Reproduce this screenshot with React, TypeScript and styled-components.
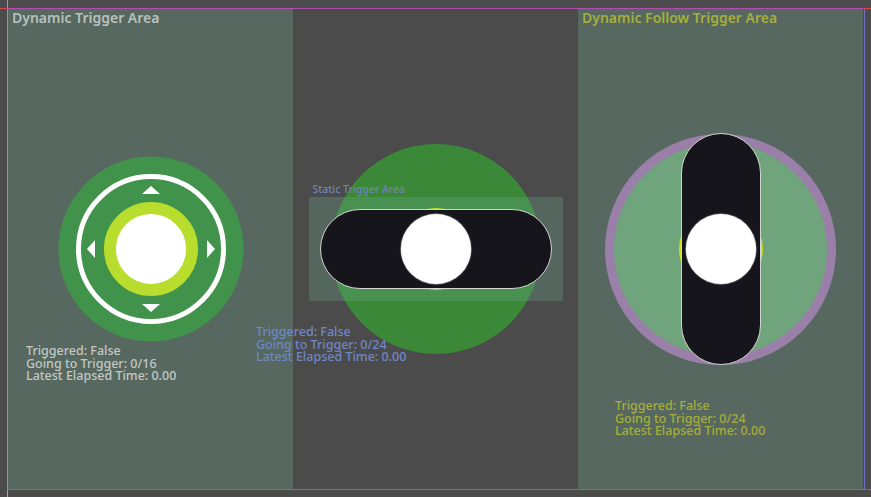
import React from "react";
import styled, { createGlobalStyle } from "styled-components";

const GlobalStyle = createGlobalStyle`
  html, body {
    margin: 0;
    padding: 0;
    background: #4b4b4b;
    font-family: "Noto Sans", "Open Sans", sans-serif;
  }
`;

const Viewport = styled.div`
  position: relative;
  width: 871px;
  height: 497px;
  overflow: hidden;
  background: #4b4b4b;
`;

const Scene = styled.div`
  display: flex;
  padding: 9px 0 0 8px;
`;

const Column = styled.div<{ $tinted?: boolean }>`
  position: relative;
  width: 285px;
  height: 480px;
  display: grid;
  place-items: center;
  background: ${(p) => (p.$tinted ? "#566860" : "transparent")};
`;

const Stack = styled.div`
  display: grid;
  place-items: center;
  & > * {
    grid-area: 1 / 1;
    position: relative;
  }
`;

const Title = styled.div<{ $color: string }>`
  position: absolute;
  left: 4px;
  top: 0;
  font-size: 14px;
  line-height: 18px;
  font-weight: 600;
  color: ${(p) => p.$color};
  white-space: nowrap;
`;

const Info = styled.div<{ $color: string; $x: number; $y: number }>`
  position: absolute;
  left: ${(p) => p.$x}px;
  top: ${(p) => p.$y}px;
  font-size: 12.5px;
  line-height: 12.5px;
  font-weight: 500;
  color: ${(p) => p.$color};
  white-space: nowrap;
  z-index: 5;
`;

const Disc = styled.div<{ $size: number; $fill: string; $ring?: string; $ringWidth?: number }>`
  width: ${(p) => p.$size}px;
  height: ${(p) => p.$size}px;
  box-sizing: border-box;
  border-radius: 50%;
  background: ${(p) => p.$fill};
  border: ${(p) => (p.$ring ? `${p.$ringWidth}px solid ${p.$ring}` : "none")};
`;

const Ball = styled.div`
  width: 70px;
  height: 70px;
  border-radius: 50%;
  background: #ffffff;
  box-shadow: 0 0 1px 0.5px rgba(255, 255, 255, 0.6);
`;

const Capsule = styled.div<{ $vertical?: boolean }>`
  box-sizing: border-box;
  width: ${(p) => (p.$vertical ? 80 : 232)}px;
  height: ${(p) => (p.$vertical ? 232 : 80)}px;
  border-radius: 40px;
  background: #17151c;
  border: 1px solid #d4d4d4;
`;

const StaticArea = styled.div`
  width: 254px;
  height: 104px;
  background: rgba(107, 167, 140, 0.3);
`;

const AreaLabel = styled.div`
  position: absolute;
  left: 4px;
  bottom: 100%;
  margin-bottom: 2px;
  font-size: 10.5px;
  line-height: 12px;
  font-weight: 500;
  color: #6d84bd;
  white-space: nowrap;
`;

const Line = styled.div<{ $x: number; $y: number; $w: number; $h: number; $color: string }>`
  position: absolute;
  left: ${(p) => p.$x}px;
  top: ${(p) => p.$y}px;
  width: ${(p) => p.$w}px;
  height: ${(p) => p.$h}px;
  background: ${(p) => p.$color};
  z-index: 10;
`;

function JoystickBase() {
  const c = 93;
  return (
    <svg width={186} height={186} viewBox="0 0 186 186">
      <circle cx={c} cy={c} r={92.5} fill="#41934b" />
      <circle cx={c} cy={c} r={72.5} fill="none" stroke="#ffffff" strokeWidth={5} />
      <polygon points={`${c},${c - 63} ${c - 9},${c - 55} ${c + 9},${c - 55}`} fill="#ffffff" />
      <polygon points={`${c},${c + 63} ${c - 9},${c + 55} ${c + 9},${c + 55}`} fill="#ffffff" />
      <polygon points={`${c - 64},${c} ${c - 56},${c - 9} ${c - 56},${c + 9}`} fill="#ffffff" />
      <polygon points={`${c + 64},${c} ${c + 56},${c - 9} ${c + 56},${c + 9}`} fill="#ffffff" />
    </svg>
  );
}

function InfoLines({ total }: { total: number }) {
  return (
    <>
      <div>Triggered: False</div>
      <div>Going to Trigger: 0/{total}</div>
      <div>Latest Elapsed Time: 0.00</div>
    </>
  );
}

export default function App() {
  return (
    <Viewport>
      <GlobalStyle />
      <Scene>
        <Column $tinted>
          <Title $color="#b9c1bd">Dynamic Trigger Area</Title>
          <Stack>
            <JoystickBase />
            <Disc $size={94} $fill="#ffffff" $ring="#b9dd2c" $ringWidth={12} />
          </Stack>
          <Info $color="#c3c8c4" $x={18} $y={336}>
            <InfoLines total={16} />
          </Info>
        </Column>

        <Column>
          <Stack>
            <Disc $size={210} $fill="#3b8838" />
            <StaticArea>
              <AreaLabel>Static Trigger Area</AreaLabel>
            </StaticArea>
            <Disc $size={82} $fill="#b9dd2c" />
            <Capsule />
            <Ball />
          </Stack>
          <Info $color="#6f87c6" $x={-37} $y={317}>
            <InfoLines total={24} />
          </Info>
        </Column>

        <Column $tinted>
          <Title $color="#a7ae3c">Dynamic Follow Trigger Area</Title>
          <Stack>
            <Disc $size={231} $fill="#70a47c" $ring="#9a80a8" $ringWidth={9} />
            <Disc $size={84} $fill="#c8e020" />
            <Capsule $vertical />
            <Ball />
          </Stack>
          <Info $color="#a7ae3c" $x={37} $y={391}>
            <InfoLines total={24} />
          </Info>
        </Column>
      </Scene>

      <Line $x={0} $y={8} $w={7} $h={1} $color="#d8484c" />
      <Line $x={864} $y={8} $w={7} $h={1} $color="#d8484c" />
      <Line $x={7} $y={8} $w={857} $h={1} $color="#b04eb0" />
      <Line $x={7} $y={0} $w={1} $h={8} $color="#7cb848" />
      <Line $x={7} $y={9} $w={1} $h={480} $color="#8c9e8c" />
      <Line $x={7} $y={490} $w={1} $h={7} $color="#a8c030" />
      <Line $x={864} $y={9} $w={1} $h={480} $color="#6e6ec4" />
      <Line $x={7} $y={489} $w={864} $h={1} $color="#6e6ec4" />
    </Viewport>
  );
}
